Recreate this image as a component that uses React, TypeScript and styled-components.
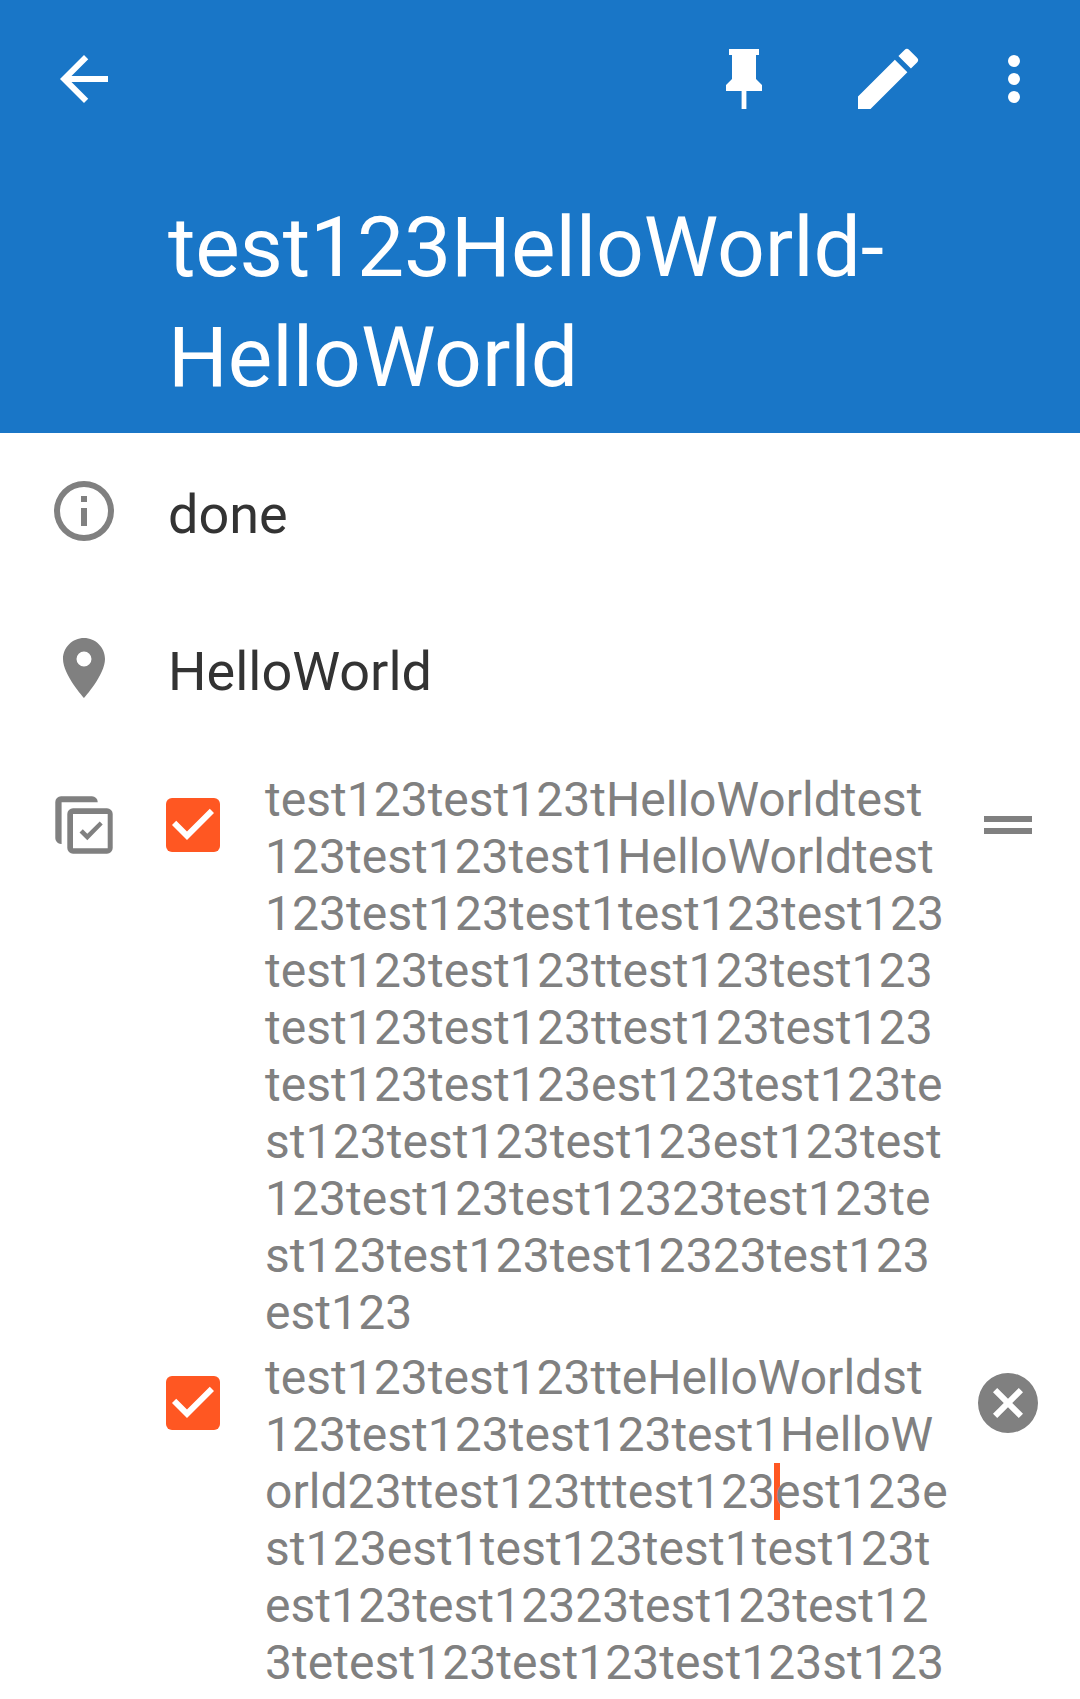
import React from "react";
import styled, { createGlobalStyle } from "styled-components";

const Global = createGlobalStyle`
  * { box-sizing: border-box; }
  body { margin: 0; background: #fff; }
`;
const Screen = styled.main`
  width: 1080px; height: 1699px; overflow: hidden;
  background: #fff; font-family: Roboto, sans-serif;
`;
const Header = styled.header`
  height: 433px; background: #1976c7; color: #fff;
`;
const Toolbar = styled.div`
  display: flex; align-items: center; height: 158px; padding: 0 30px 0 48px;
`;
const IconButton = styled.button<{ $gap?: number; $grow?: boolean }>`
  border: 0; padding: 0; background: none; color: inherit; display: block;
  margin-left: ${p => p.$gap ?? 0}px;
  margin-right: ${p => (p.$grow ? "auto" : 0)};
`;
const Icon = styled.svg<{ $size?: number }>`
  display: block; fill: currentColor;
  width: ${p => p.$size ?? 72}px; height: ${p => p.$size ?? 72}px;
`;
const Title = styled.h1`
  margin: 0; padding: 35px 0 0 168px; font-weight: 400;
  font-size: 84px; line-height: 110px; white-space: nowrap;
`;
const Run = styled.span<{ $track: number }>`
  letter-spacing: ${p => p.$track}px;
`;
const Details = styled.section`
  color: #808080;
`;
const InfoRow = styled.div<{ $h: number }>`
  display: flex; align-items: center; height: ${p => p.$h}px; padding-left: 48px;
`;
const InfoText = styled.span`
  margin-left: 48px; padding-top: 8px; font-size: 54px; line-height: 64px; color: #333;
`;
const Checklist = styled.div`
  display: flex; padding: 24px 0 0 48px;
`;
const ListIcon = styled.div`
  width: 118px; padding-top: 18px;
`;
const Items = styled.div`
  flex: 1;
`;
const Item = styled.div`
  display: flex; height: 578px; align-items: flex-start;
`;
const Checkbox = styled.span`
  width: 54px; height: 54px; margin-top: 27px; border-radius: 6px;
  background: #ff5722; color: #fff;
`;
const ItemText = styled.div`
  width: 700px; margin-left: 45px; font-size: 48px; line-height: 57px; white-space: nowrap;
`;
const Line = styled.div<{ $track?: number }>`
  letter-spacing: ${p => p.$track ?? 0.06}px;
`;
const Caret = styled.span`
  display: inline-block; width: 6px; height: 57px; margin: 0 -5px 0 -1px; background: #ff5722; vertical-align: top;
`;
const Action = styled.div`
  margin: 18px 0 0 7px;
`;

const first = [
  "test123test123tHelloWorldtest", "123test123test1HelloWorldtest", "123test123test1test123test123",
  "test123test123ttest123test123", "test123test123ttest123test123", "test123test123est123test123te",
  "st123test123test123est123test", "123test123test12323test123te", "st123test123test12323test123", "est123",
];

const Check = () => (
  <Checkbox><Icon $size={54} viewBox="3 3 18 18"><path d="M10 17l-5-5 1.41-1.41L10 14.17l7.59-7.59L19 8z" /></Icon></Checkbox>
);

export default function App() {
  return (
    <Screen>
      <Global />
      <Header>
        <Toolbar>
          <IconButton $grow aria-label="Back"><Icon viewBox="0 0 24 24"><path d="M20 11H7.83l5.59-5.59L12 4l-8 8 8 8 1.41-1.41L7.83 13H20v-2z" /></Icon></IconButton>
          <IconButton aria-label="Pin"><Icon viewBox="0 0 24 24"><path d="M16 12V4h1V2H7v2h1v8l-2 2v2h5.2v6h1.6v-6H18v-2l-2-2z" /></Icon></IconButton>
          <IconButton $gap={68} aria-label="Edit"><Icon $size={80} viewBox="0 0 24 24"><path d="M3 17.25V21h3.75L17.81 9.94l-3.75-3.75L3 17.25zM20.71 7.04a.996.996 0 0 0 0-1.41l-2.34-2.34a.996.996 0 0 0-1.41 0l-1.83 1.83 3.75 3.75 1.83-1.83z" /></Icon></IconButton>
          <IconButton $gap={50} aria-label="More"><Icon viewBox="0 0 24 24"><path d="M12 8a2 2 0 1 0 0-4 2 2 0 0 0 0 4m0 2a2 2 0 1 0 0 4 2 2 0 0 0 0-4m0 6a2 2 0 1 0 0 4 2 2 0 0 0 0-4" /></Icon></IconButton>
        </Toolbar>
        <Title><Run $track={-0.2}>test123</Run><Run $track={-0.09}>HelloWorld-</Run><br /><Run $track={-0.06}>HelloWorld</Run></Title>
      </Header>
      <Details>
        <InfoRow $h={156}>
          <Icon viewBox="0 0 24 24"><path d="M11 7h2v2h-2zm0 4h2v6h-2zm1-9a10 10 0 1 0 0 20 10 10 0 0 0 0-20m0 18a8 8 0 1 1 0-16 8 8 0 0 1 0 16" /></Icon>
          <InfoText>done</InfoText>
        </InfoRow>
        <InfoRow $h={158}>
          <Icon viewBox="0 0 24 24"><path d="M12 2C8.13 2 5 5.13 5 9c0 5.25 7 13 7 13s7-7.75 7-13c0-3.87-3.13-7-7-7m0 9.5a2.5 2.5 0 1 1 0-5 2.5 2.5 0 0 1 0 5" /></Icon>
          <InfoText>HelloWorld</InfoText>
        </InfoRow>
        <Checklist>
          <ListIcon>
            <Icon viewBox="0 0 72 72">
              <path d="M49.7 13.3H13.6V55H13a5.7 5.7 0 0 1-5.7-5.7V13A5.7 5.7 0 0 1 13 7.3h31a5.7 5.7 0 0 1 5.7 5.7z" />
              <path fillRule="evenodd" d="M25 19.3h34a5.7 5.7 0 0 1 5.7 5.7v34a5.7 5.7 0 0 1-5.7 5.7H25a5.7 5.7 0 0 1-5.7-5.7V25a5.7 5.7 0 0 1 5.7-5.7M25 25v34.3h34.7V25z" />
              <path d="M31.5 43.5l3.3-3.3 4.5 4.6 12.4-12.4 3 3.1L39.3 51.2z" />
            </Icon>
          </ListIcon>
          <Items>
            <Item>
              <Check />
              <ItemText>{first.map((t, i) => <Line key={i} $track={i < 2 ? 0.01 : 0.06}>{t}</Line>)}</ItemText>
              <Action><Icon viewBox="0 0 24 24"><path d="M4 9h16v2H4zm0 4h16v2H4z" /></Icon></Action>
            </Item>
            <Item>
              <Check />
              <ItemText>
                <Line $track={0.02}>test123test123tteHelloWorldst</Line>
                <Line $track={0.02}>123test123test123test1HelloW</Line>
                <Line>orld23ttest123tttest123<Caret />est123e</Line>
                <Line>st123est1test123test1test123t</Line>
                <Line>est123test12323test123test12</Line>
                <Line>3tetest123test123test123st123</Line>
              </ItemText>
              <Action><Icon viewBox="0 0 24 24"><path d="M12 2a10 10 0 1 0 0 20 10 10 0 0 0 0-20m5 13.59L15.59 17 12 13.41 8.41 17 7 15.59 10.59 12 7 8.41 8.41 7 12 10.59 15.59 7 17 8.41 13.41 12z" /></Icon></Action>
            </Item>
          </Items>
        </Checklist>
      </Details>
    </Screen>
  );
}
